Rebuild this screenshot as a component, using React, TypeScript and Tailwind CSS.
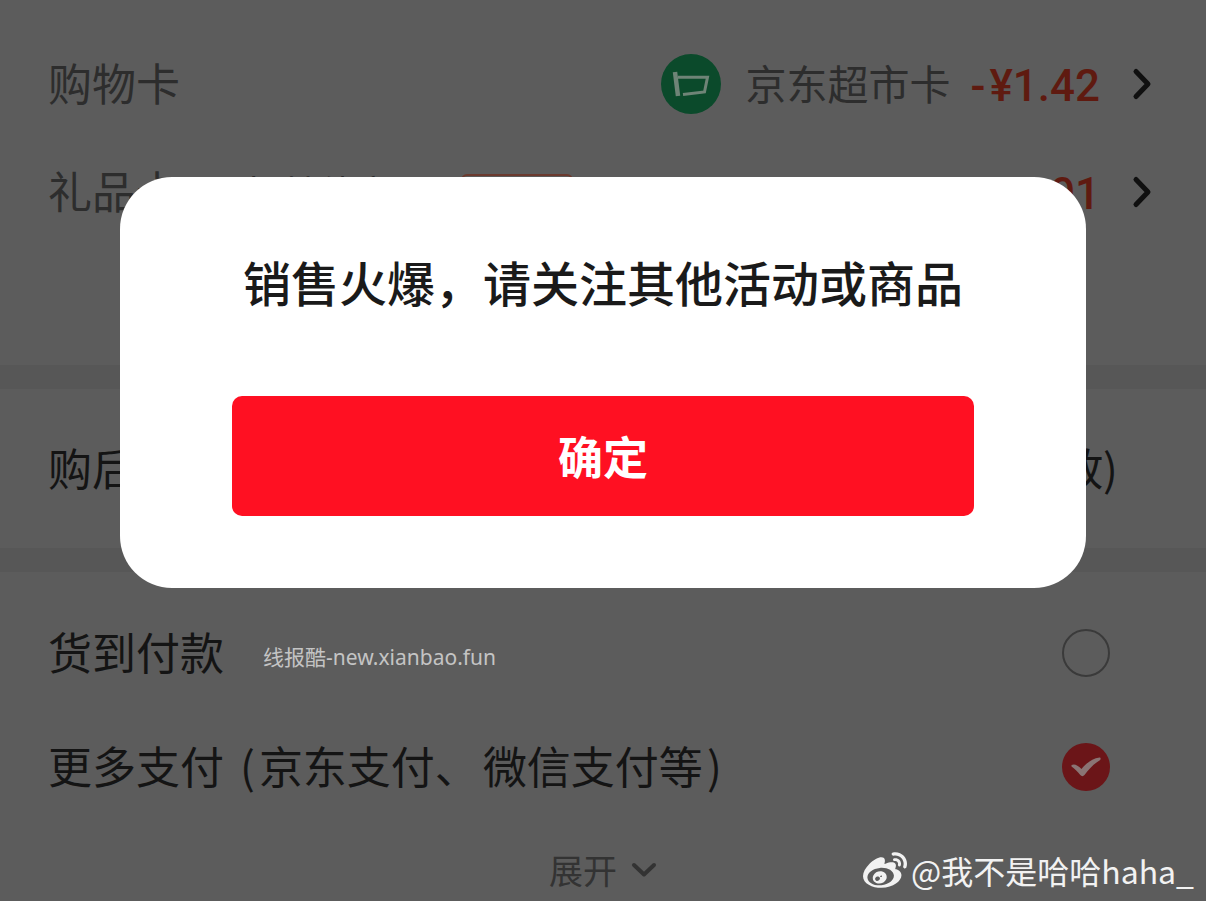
import type { ReactNode } from "react";
import { SiSinaweibo } from "react-icons/si";

const LABEL = "text-[44px] leading-[60px] pb-1";

function Chevron() {
  return (
    <svg
      viewBox="0 0 20 34"
      className="h-[34px] w-5"
      fill="none"
      stroke="#101010"
      strokeWidth="5"
      strokeLinecap="round"
      strokeLinejoin="round"
      aria-hidden="true"
    >
      <path d="M4 4.500 16 17 4 29.500" />
    </svg>
  );
}

function MarketLogo() {
  return (
    <svg viewBox="0 0 60 60" className="size-[60px]" aria-hidden="true">
      <circle cx="30" cy="30" r="30" fill="#0b4a2b" />
      <g fill="none" stroke="#6f8477">
        <path d="M14 18 17 42" strokeWidth="4.500" />
        <path d="M17 23.200H46.500L43.500 38 22 40.500" strokeWidth="3" />
      </g>
    </svg>
  );
}

interface CardRowProps {
  label: string;
  amount: string;
  note?: ReactNode;
  children?: ReactNode;
}

function CardRow({ label, amount, note, children }: CardRowProps) {
  return (
    <div className="flex h-[108px] items-center text-[#2d2d2d]">
      <span className={LABEL}>{label}</span>
      {note}
      <button className="ml-auto flex items-center">
        {children}
        <span className="flex gap-1 pt-1 font-['Roboto',sans-serif] text-[44px] leading-[60px] font-medium text-[#5f1a10]">
          <span>-</span>
          <span>{amount}</span>
        </span>
        <span className="ml-8">
          <Chevron />
        </span>
      </button>
    </div>
  );
}

export default function App() {
  return (
    <div className="relative min-h-screen overflow-hidden bg-[#5c5c5c] font-['Noto_Sans_CJK_SC',sans-serif] text-[#141414]">
      <main>
        <section className="h-[365px] pt-[30px] pr-[54px] pl-12">
          <CardRow label="购物卡" amount="¥1.42">
            <MarketLogo />
            <span className="mr-5 ml-6 pb-1 text-[41px] leading-[60px]">京东超市卡</span>
          </CardRow>
          <CardRow
            label="礼品卡"
            amount="¥0.01"
            note={
              <>
                <span className="ml-14 text-[37px] leading-[60px]">卡 其他商品</span>
                <span className="ml-8 h-9 w-28 rounded-md border-2 border-[#6b3a2e]" />
              </>
            }
          />
        </section>

        <section className="flex h-[207px] items-center justify-between border-y-[24px] border-[#575757] pr-[88px] pl-12">
          <span className={LABEL}>购后</span>
          <span className={LABEL}>放)</span>
        </section>

        <section className="pt-6">
          <label className="flex h-[114px] items-center pr-24 pl-12">
            <span className={LABEL}>货到付款</span>
            <input
              type="radio"
              name="pay"
              className="ml-auto size-12 appearance-none rounded-full border-2 border-[#3a3a3a]"
            />
          </label>
          <label className="flex h-[114px] items-center pr-24 pl-12">
            <span className={`${LABEL} flex gap-1`}>
              <span className="mr-3">更多支付</span>
              <span>(</span>
              <span>京东支付、</span>
              <span>微信支付等</span>
              <span>)</span>
            </span>
            <span className="relative ml-auto size-12">
              <input
                type="radio"
                name="pay"
                defaultChecked
                className="block size-12 appearance-none rounded-full bg-[#6b1518]"
              />
              <svg
                viewBox="0 0 48 48"
                className="pointer-events-none absolute inset-0"
                fill="#8a7474"
                aria-hidden="true"
              >
                <path d="M9.500 22c3-1.500 6 0 10 4C24 20.500 30 15.500 37.500 14.500c1.500 0 1.500 2 0 3C31 21.500 27 26 22.500 32c-1.200 1.500-3 1.500-4.200 0C15.500 28.500 12.500 25.500 9.500 23.500z" />
              </svg>
            </span>
          </label>
          <button className="mx-auto flex items-center gap-[14px] pt-[22px] text-[34px] leading-[48px] text-[#333]">
            展开
            <svg
              viewBox="0 0 26 16"
              className="h-4 w-[26px]"
              fill="none"
              stroke="currentColor"
              strokeWidth="4"
              strokeLinecap="round"
              strokeLinejoin="round"
              aria-hidden="true"
            >
              <path d="M3 3 13 12.500 23 3" />
            </svg>
          </button>
        </section>
      </main>

      <p className="absolute top-[642px] left-[263px] font-['Noto_Sans','Noto_Sans_CJK_SC',sans-serif] text-[21px] leading-[30px] text-[#c4c4c4]">
        线报酷-new.xianbao.fun
      </p>

      <div className="absolute right-3 bottom-[7px] flex items-center gap-1 whitespace-nowrap text-[#f2f2f2]">
        <SiSinaweibo className="size-11" />
        <span className="text-[32px] leading-[48px]">@我不是哈哈haha_</span>
      </div>

      <div
        role="dialog"
        aria-modal="true"
        aria-labelledby="notice"
        className="absolute inset-x-[120px] top-[177px] rounded-[52px] bg-white px-28 pt-[68px] pb-[72px] text-center"
      >
        <h2
          id="notice"
          className="text-[48px] leading-[72px] font-medium whitespace-nowrap text-[#1a1a1a]"
        >
          销售火爆，请关注其他活动或商品
        </h2>
        <button className="mt-[79px] h-[120px] w-full rounded-[10px] bg-[#ff1022] text-[45px] font-bold text-white">
          确定
        </button>
      </div>
    </div>
  );
}
